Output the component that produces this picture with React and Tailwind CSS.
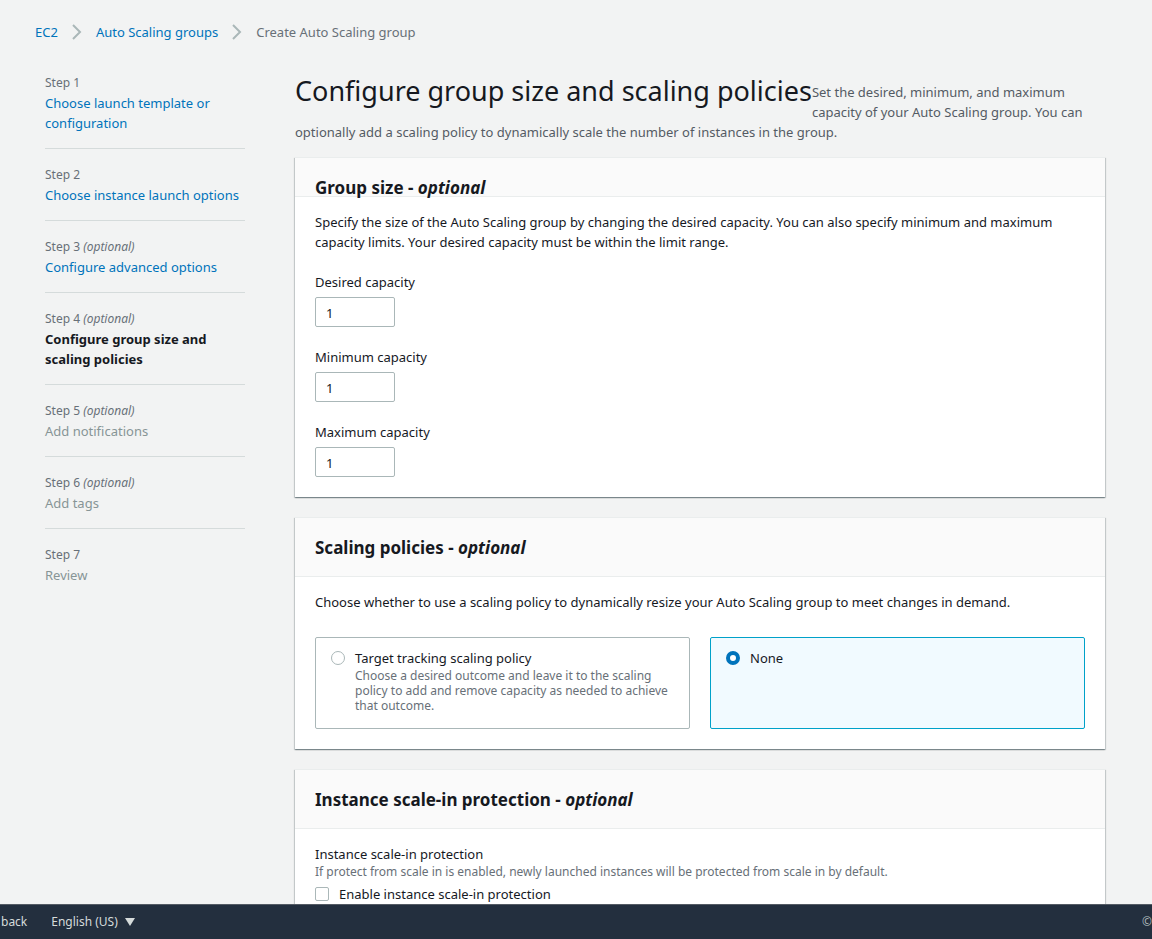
const steps = [
  { name: "Choose launch template or configuration", state: "done" },
  { name: "Choose instance launch options", state: "done" },
  { name: "Configure advanced options", optional: true, state: "done" },
  { name: "Configure group size and scaling policies", optional: true, state: "current" },
  { name: "Add notifications", optional: true, state: "todo" },
  { name: "Add tags", optional: true, state: "todo" },
  { name: "Review", state: "todo" },
];

function Chevron() {
  return (
    <svg className="mx-[14px] shrink-0" width="10" height="16" viewBox="0 0 10 16" fill="none" stroke="#aab7b8" strokeWidth="2" aria-hidden="true">
      <path d="M1 1l7 7-7 7" />
    </svg>
  );
}

function Breadcrumbs() {
  return (
    <nav aria-label="Breadcrumbs" className="flex items-center px-[35px] pt-[22px] leading-5">
      <a href="#ec2" className="text-[#0073bb]">EC2</a>
      <Chevron />
      <a href="#groups" className="text-[#0073bb]">Auto Scaling groups</a>
      <Chevron />
      <span className="text-[#687078]">Create Auto Scaling group</span>
    </nav>
  );
}

function StepName({ step }) {
  if (step.state === "done") return <a href="#step" className="block text-[#0073bb]">{step.name}</a>;
  if (step.state === "current") return <span className="block font-bold text-[#16191f]">{step.name}</span>;
  return <span className="block text-[#879596]">{step.name}</span>;
}

function Steps() {
  return (
    <nav aria-label="Steps" className="w-[200px] shrink-0">
      <ol>
        {steps.map((step, i) => (
          <li key={step.name} className="mb-4 border-b border-[#d5dbdb] pb-[15px] leading-5 last:border-0">
            <div className="text-xs leading-5 text-[#687078]">
              Step {i + 1} {step.optional && <i>(optional)</i>}
            </div>
            <StepName step={step} />
          </li>
        ))}
      </ol>
    </nav>
  );
}

function Card({ title, compact, children }) {
  return (
    <section className="mb-5 border-t border-[#eaeded] bg-white shadow-[0_1px_1px_0_rgba(0,28,36,0.3),1px_1px_1px_0_rgba(0,28,36,0.15),-1px_1px_1px_0_rgba(0,28,36,0.15)]">
      <div className={`border-b border-[#eaeded] bg-[#fafafa] px-5 pt-[19px] ${compact ? "h-[39px]" : "h-[59px]"}`}>
        <h2 className="text-[17px] leading-[22px] font-bold">
          {title} - <i>optional</i>
        </h2>
      </div>
      <div className="px-5 pt-[15px] pb-5">{children}</div>
    </section>
  );
}

function CapacityField({ id, label }) {
  return (
    <div>
      <label htmlFor={id} className="block">{label}</label>
      <input
        id={id}
        type="text"
        inputMode="numeric"
        defaultValue="1"
        className="mt-[5px] block h-[30px] w-20 rounded-[2px] border border-[#aab7b8] bg-white px-[10px] pt-[2px]"
      />
    </div>
  );
}

function PolicyTile({ id, label, description, defaultChecked }) {
  return (
    <label
      htmlFor={id}
      className="flex flex-1 gap-[10px] rounded-[2px] border border-[#aab7b8] px-[15px] pt-[10px] pb-[15px] has-checked:border-[#00a1c9] has-checked:bg-[#f1faff]"
    >
      <input
        id={id}
        type="radio"
        name="policy"
        defaultChecked={defaultChecked}
        className="mt-[3px] size-[14px] shrink-0 appearance-none rounded-full border border-[#aab7b8] bg-white checked:border-4 checked:border-[#0073bb]"
      />
      <span className="block">
        <span className="block">{label}</span>
        {description && <span className="block text-xs leading-[15px] text-[#687078]">{description}</span>}
      </span>
    </label>
  );
}

function Footer() {
  return (
    <footer className="flex h-[35px] shrink-0 items-center justify-between border-t border-[#545b64] bg-[#232f3e] text-xs text-[#d5dbdb]">
      <div className="flex items-center gap-6 pl-px">
        <a href="#feedback">back</a>
        <button type="button" className="flex items-center gap-[7px]">
          English (US)
          <svg width="10" height="8" viewBox="0 0 10 8" fill="currentColor" aria-hidden="true">
            <path d="M0 0h10L5 8z" />
          </svg>
        </button>
      </div>
      <span className="text-[#aab7b8]">©</span>
    </footer>
  );
}

export default function App() {
  return (
    <div className="flex h-screen flex-col bg-[#f2f3f3] font-['Noto_Sans',sans-serif] text-[13px] leading-5 text-[#16191f]">
      <div className="min-h-0 flex-1 overflow-y-auto [scrollbar-width:none]">
        <Breadcrumbs />
        <div className="flex gap-[50px] pt-[31px] pr-[47px] pl-[45px]">
          <Steps />
          <main className="min-w-0 flex-1">
            <div className="flow-root">
              <h1 className="float-left text-[27px] leading-9">Configure group size and scaling policies</h1>
              <p className="pt-[9px] text-[#545b64]">
                Set the desired, minimum, and maximum capacity of your Auto Scaling group. You can optionally add a
                scaling policy to dynamically scale the number of instances in the group.
              </p>
            </div>
            <div className="mt-[15px]">
              <Card title="Group size" compact>
                <p>
                  Specify the size of the Auto Scaling group by changing the desired capacity. You can also specify
                  minimum and maximum capacity limits. Your desired capacity must be within the limit range.
                </p>
                <div className="mt-5 flex flex-col gap-5">
                  <CapacityField id="desired" label="Desired capacity" />
                  <CapacityField id="minimum" label="Minimum capacity" />
                  <CapacityField id="maximum" label="Maximum capacity" />
                </div>
              </Card>
              <Card title="Scaling policies">
                <p>
                  Choose whether to use a scaling policy to dynamically resize your Auto Scaling group to meet changes
                  in demand.
                </p>
                <div className="mt-[25px] flex gap-5">
                  <PolicyTile
                    id="tracking"
                    label="Target tracking scaling policy"
                    description="Choose a desired outcome and leave it to the scaling policy to add and remove capacity as needed to achieve that outcome."
                  />
                  <PolicyTile id="none" label="None" defaultChecked />
                </div>
              </Card>
              <Card title="Instance scale-in protection">
                <h3>Instance scale-in protection</h3>
                <p className="text-xs leading-[15px] text-[#687078]">
                  If protect from scale in is enabled, newly launched instances will be protected from scale in by
                  default.
                </p>
                <label htmlFor="protect" className="mt-[5px] flex items-center gap-[10px]">
                  <input
                    id="protect"
                    type="checkbox"
                    className="size-[14px] appearance-none rounded-[2px] border border-[#aab7b8] bg-white checked:bg-[#0073bb]"
                  />
                  Enable instance scale-in protection
                </label>
              </Card>
            </div>
          </main>
        </div>
      </div>
      <Footer />
    </div>
  );
}
